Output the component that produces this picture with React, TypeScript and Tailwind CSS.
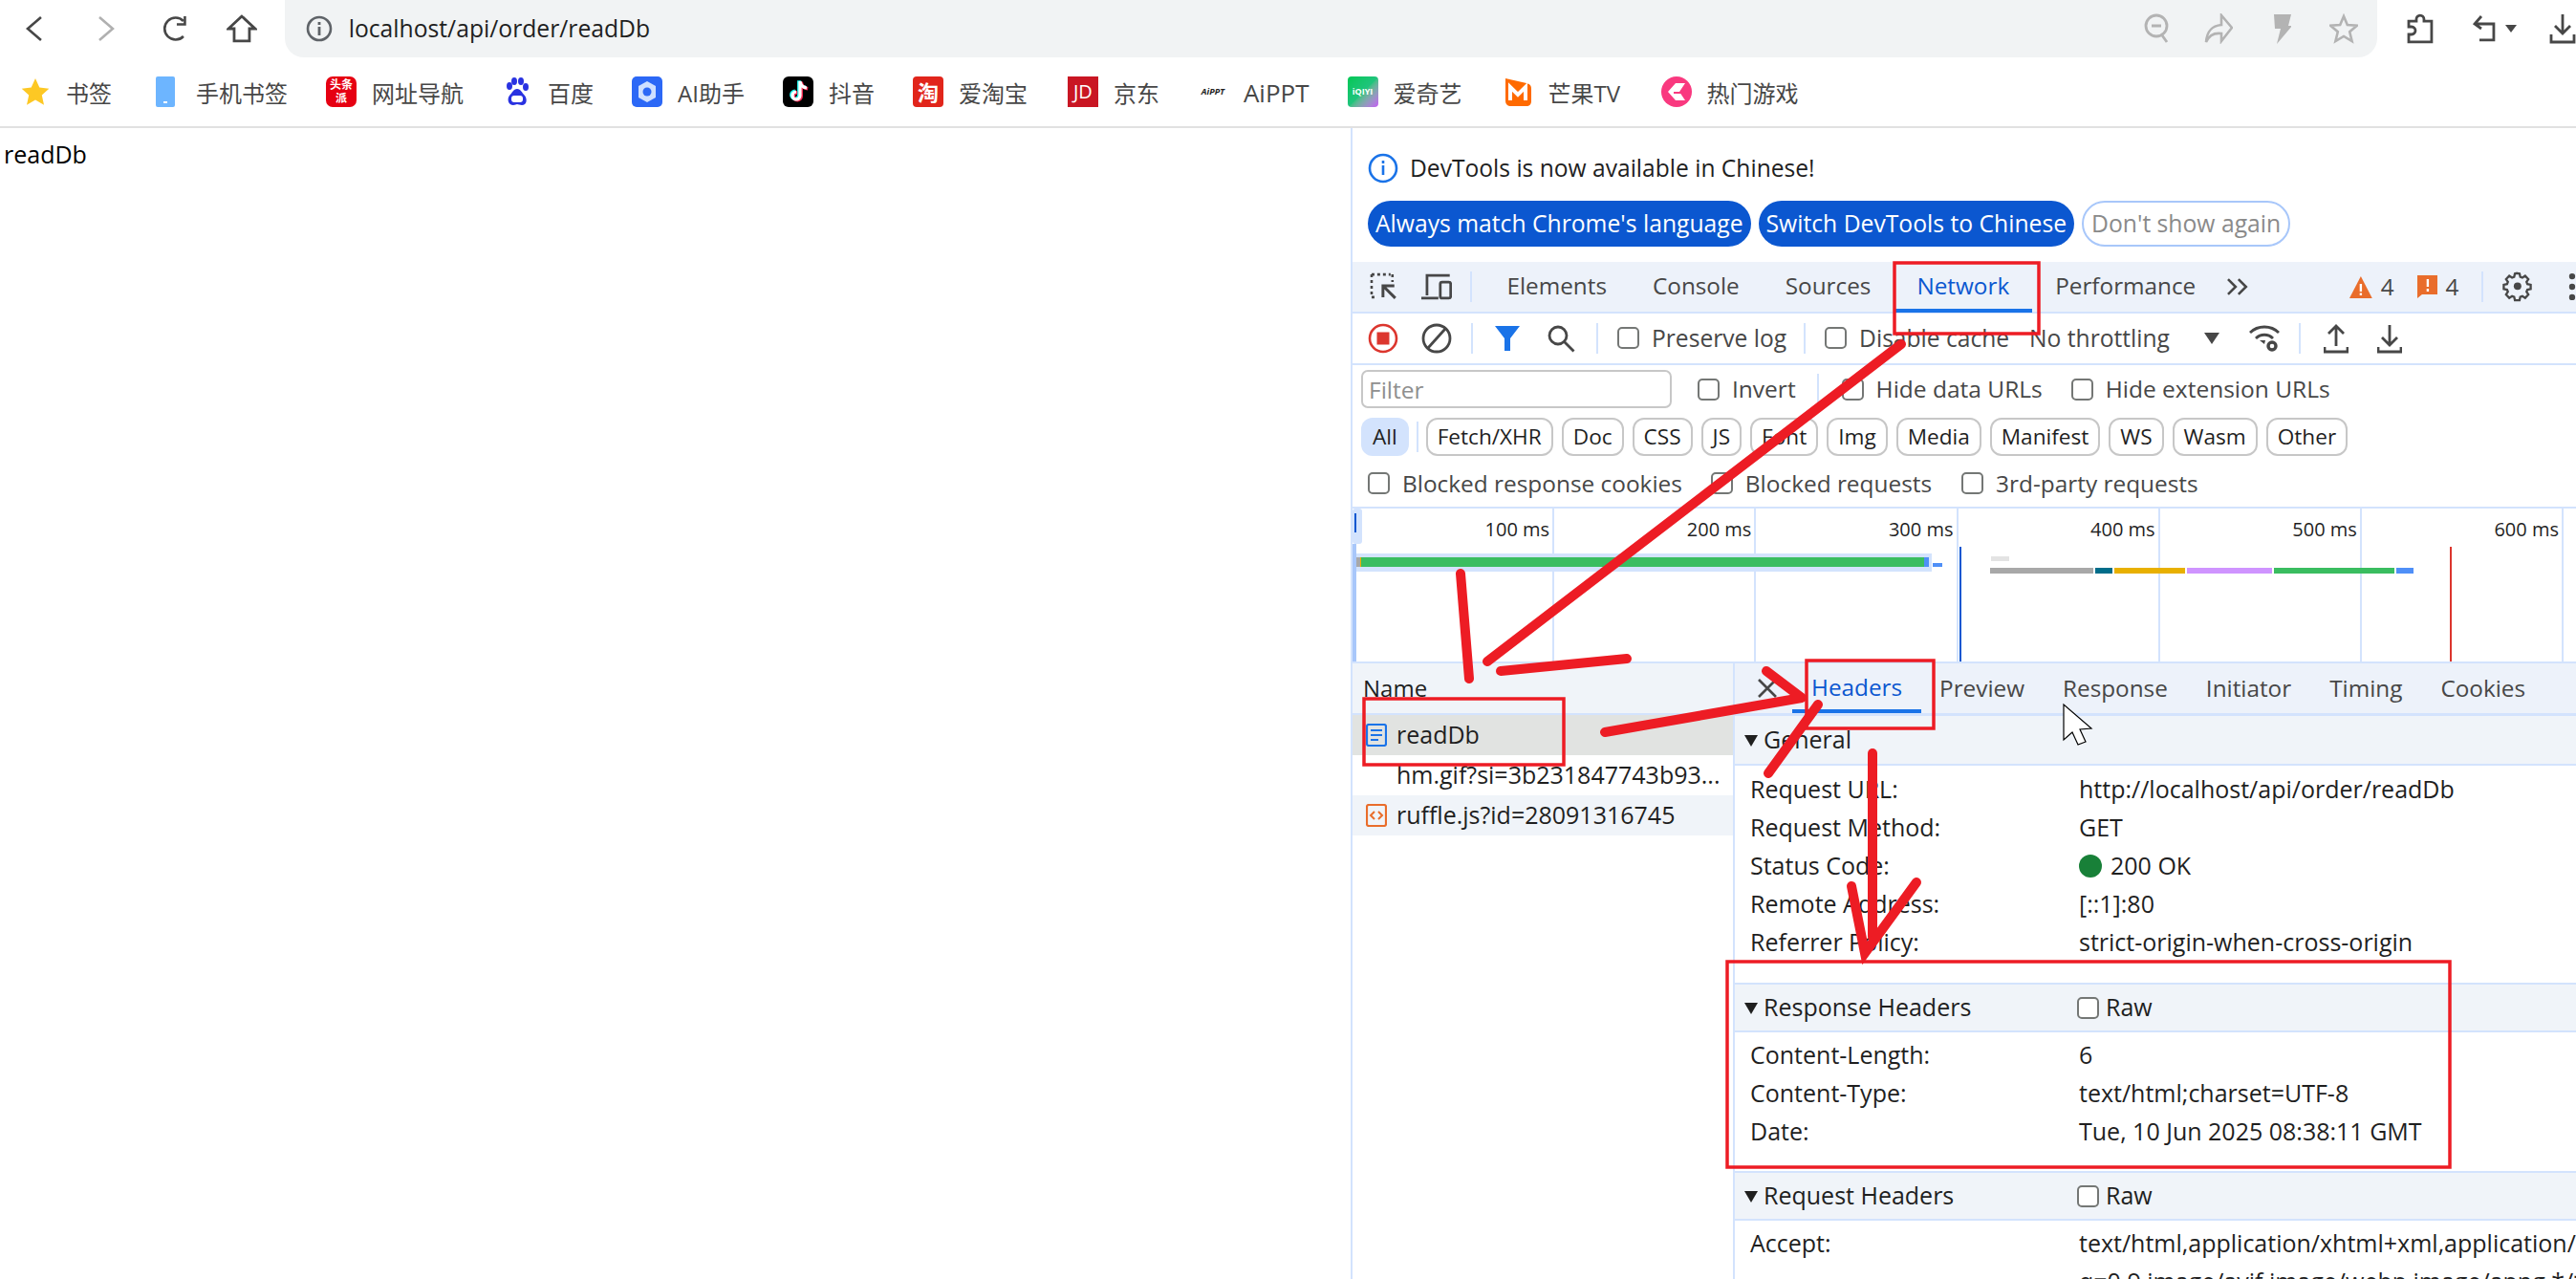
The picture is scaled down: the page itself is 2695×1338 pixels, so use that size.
const Check = () => (
  <span className="w-[23px] h-[23px] shrink-0 border-2 border-[#747775] rounded-[5px] bg-white" />
);

const Sep = ({ className }: { className: string }) => (
  <span className={"w-[2px] h-[32px] shrink-0 bg-[#d3e3fd] " + className} />
);

const CheckLabel = ({ text, className }: { text: string; className?: string }) => (
  <div className={"flex items-center gap-[13px] text-[#474747] " + (className || "")}>
    <Check />
    <span>{text}</span>
  </div>
);

const bookmarks: { label: string; text?: string; icon: React.ReactNode }[] = [
  {
    label: "书签",
    icon: (
      <svg viewBox="0 0 32 32" className="w-8 h-8">
        <path d="M16 2l4.3 9.6 10 1.1-7.5 6.9 2.2 10.2L16 24.6 7 29.8l2.2-10.2-7.5-6.9 10-1.1z" fill="#fdc824" />
      </svg>
    ),
  },
  {
    label: "手机书签",
    icon: (
      <svg viewBox="0 0 32 32" className="w-8 h-8">
        <rect x="6" y="0" width="20" height="32" rx="2" fill="#6db5ff" />
        <rect x="14" y="26" width="4" height="2" fill="#fff" />
      </svg>
    ),
  },
  {
    label: "网址导航",
    icon: (
      <div className="w-8 h-8 rounded-[7px] bg-[#e60012] text-white text-[12px] leading-[14px] font-bold flex flex-col items-center justify-center">
        <span>头条</span>
        <span>派</span>
      </div>
    ),
  },
  {
    label: "百度",
    icon: (
      <svg viewBox="0 0 32 32" className="w-8 h-8">
        <g fill="#2932e1">
          <ellipse cx="8" cy="10" rx="3" ry="4" />
          <ellipse cx="13" cy="5" rx="3" ry="4" />
          <ellipse cx="20" cy="5" rx="3" ry="4" />
          <ellipse cx="25" cy="11" rx="3" ry="4" />
          <path d="M16 13c-4 0-5 4-8 7-3 4-1 10 4 10 2 0 3-1 4-1s3 1 5 1c5 0 6-6 3-10-3-3-4-7-8-7z" />
        </g>
        <rect x="10" y="20" width="12" height="7" rx="3" fill="#fff" />
      </svg>
    ),
  },
  {
    label: "AI助手",
    icon: (
      <svg viewBox="0 0 32 32" className="w-8 h-8">
        <rect width="32" height="32" rx="5" fill="#2c68f6" />
        <path d="M16 5l9 5v12l-9 5-9-5V10z" fill="#cfe0ff" />
        <circle cx="16" cy="16" r="4.5" fill="#2c68f6" />
      </svg>
    ),
  },
  {
    label: "抖音",
    icon: (
      <svg viewBox="0 0 32 32" className="w-8 h-8">
        <rect width="32" height="32" rx="6" fill="#000" />
        <path d="M18 5v15a4 4 0 1 1-4-4M18 5c.5 4 3 6.5 7 7" fill="none" stroke="#25f4ee" strokeWidth="3.5" transform="translate(-1.2 -.8)" />
        <path d="M18 5v15a4 4 0 1 1-4-4M18 5c.5 4 3 6.5 7 7" fill="none" stroke="#fe2c55" strokeWidth="3.5" transform="translate(1.2 .8)" />
        <path d="M18 5v15a4 4 0 1 1-4-4M18 5c.5 4 3 6.5 7 7" fill="none" stroke="#fff" strokeWidth="3.2" />
      </svg>
    ),
  },
  {
    label: "爱淘宝",
    text: "w-[74px]",
    icon: (
      <div className="w-8 h-8 rounded-[4px] bg-[#e1251b] text-white text-[22px] leading-8 text-center font-bold">淘</div>
    ),
  },
  {
    label: "京东",
    icon: <div className="w-8 h-8 bg-[#c91623] text-white text-[20px] leading-8 text-center">JD</div>,
  },
  {
    label: "AiPPT",
    text: "text-[26px]",
    icon: <div className="w-8 h-8 text-[#222] text-[9px] leading-8 text-center font-bold italic whitespace-nowrap">AiPPT</div>,
  },
  {
    label: "爱奇艺",
    text: "w-[74px]",
    icon: (
      <div className="w-8 h-8 rounded-[4px] bg-linear-to-br from-[#00c853] via-[#1fc47c] to-[#c455f5] text-white text-[9px] leading-8 text-center font-bold">
        iQIYI
      </div>
    ),
  },
  {
    label: "芒果TV",
    text: "w-[78px]",
    icon: (
      <svg viewBox="0 0 32 32" className="w-8 h-8">
        <path d="M3 2l22 5c4 1 5 3 5 6v13c0 3-2 5-5 5H9c-4 0-6-2-6-6z" fill="#ff6a00" />
        <path d="M8 25V11l8 8 8-8v14" fill="none" stroke="#fff" strokeWidth="4" />
      </svg>
    ),
  },
  {
    label: "热门游戏",
    icon: (
      <svg viewBox="0 0 32 32" className="w-8 h-8">
        <circle cx="16" cy="16" r="16" fill="#f9397f" />
        <path d="M15 7L7 16l8 9h10l-6-9 6-9z" fill="#fff" />
        <path d="M13 16h15v2H13z" fill="#f9397f" />
      </svg>
    ),
  },
];

const BrowserBar = () => (
  <div className="h-[60px] flex items-center">
    <svg viewBox="0 0 20 28" className="w-[20px] h-[28px] ml-[26px]">
      <path d="M17 2L3 14l14 12" fill="none" stroke="#474747" strokeWidth="2.6" />
    </svg>
    <svg viewBox="0 0 20 28" className="w-[20px] h-[28px] ml-[55px]">
      <path d="M3 2l14 12L3 26" fill="none" stroke="#b0b0b0" strokeWidth="2.6" />
    </svg>
    <svg viewBox="0 0 28 28" className="w-[28px] h-[28px] ml-[48px]">
      <path d="M23 22a11.5 11.5 0 1 1 0-16" fill="none" stroke="#474747" strokeWidth="2.6" />
      <path d="M24.5 1v8.5H16" fill="none" stroke="#474747" strokeWidth="2.6" />
    </svg>
    <svg viewBox="0 0 32 30" className="w-[32px] h-[30px] ml-[40px]">
      <path d="M16 2L2 15h6v13h16V15h6z" fill="none" stroke="#474747" strokeWidth="2.8" />
    </svg>
    <div className="ml-[29px] w-[2196px] h-[60px] bg-[#f1f3f4] rounded-b-[20px] flex items-center">
      <svg viewBox="0 0 28 28" className="w-[28px] h-[28px] ml-[22px]">
        <circle cx="14" cy="14" r="12" fill="none" stroke="#5f6368" strokeWidth="2.6" />
        <path d="M14 12v9M14 7v3" stroke="#5f6368" strokeWidth="2.8" />
      </svg>
      <span className="ml-[17px] text-[#1f1f1f] text-[24.7px]">localhost/api/order/readDb</span>
      <div className="ml-auto flex items-center">
        <svg viewBox="0 0 28 32" className="w-[28px] h-[32px]">
          <circle cx="13" cy="13" r="11" fill="none" stroke="#b3b3b3" strokeWidth="2.8" />
          <path d="M8 13h10" stroke="#b3b3b3" strokeWidth="3" />
          <path d="M19 23l5 7" stroke="#b3b3b3" strokeWidth="2.8" />
        </svg>
        <svg viewBox="0 0 30 32" className="w-[30px] h-[32px] ml-[35px]">
          <path d="M18 2l11 13-11 14v-8c-8-1-13 2-16 9 1-12 6-17 16-18z" fill="none" stroke="#b3b3b3" strokeWidth="2.6" />
        </svg>
        <svg viewBox="0 0 20 32" className="w-[20px] h-[32px] ml-[41px]">
          <path d="M2 1h18l-3 12h4L5 32l4-16H3z" fill="#b3b3b3" />
        </svg>
        <svg viewBox="0 0 30 32" className="w-[30px] h-[32px] ml-[40px] mr-[20px]">
          <path d="M15 3l3.8 9 10 .8-7.6 6.4 2.4 9.8L15 24l-8.6 5 2.4-9.8L1.2 12.8l10-.8z" fill="none" stroke="#b3b3b3" strokeWidth="2.6" />
        </svg>
      </div>
    </div>
    <svg viewBox="0 0 28 32" className="w-[28px] h-[32px] ml-[31px]">
      <path d="M2 8h8V6a4 4 0 0 1 8 0v2h8v22H2v-8h3a4 4 0 0 0 0-8H2z" fill="none" stroke="#474747" strokeWidth="2.8" />
    </svg>
    <svg viewBox="0 0 28 32" className="w-[28px] h-[32px] ml-[40px]">
      <path d="M3 11h20v17H8M10 3L3 11l7 5" fill="none" stroke="#474747" strokeWidth="2.8" />
    </svg>
    <svg viewBox="0 0 12 8" className="w-[12px] h-[8px] ml-[7px]">
      <path d="M0 0h12L6 8z" fill="#474747" />
    </svg>
    <svg viewBox="0 0 28 32" className="w-[28px] h-[32px] ml-[34px] shrink-0">
      <path d="M14 1v20M6 13l8 8 8-8M2 22v8h24v-8" fill="none" stroke="#474747" strokeWidth="2.8" />
    </svg>
  </div>
);

const Bookmarks = () => (
  <div className="h-[74px] flex items-center gap-[40px] pl-[21px] border-b-2 border-[#e1e1e1] text-[24px] text-[#474747]">
    {bookmarks.map((b) => (
      <div key={b.label} className="flex items-center gap-4">
        {b.icon}
        <span className={"mt-[3px] " + (b.text || "")}>{b.label}</span>
      </div>
    ))}
  </div>
);

const InfoBar = () => (
  <div className="h-[140px] pl-[16px] pt-[26px]">
    <div className="flex items-center gap-[12px] h-[32px] text-[24.6px] text-[#1f1f1f]">
      <svg viewBox="0 0 32 32" className="w-[32px] h-[32px]">
        <circle cx="16" cy="16" r="14" fill="none" stroke="#1a73e8" strokeWidth="2.6" />
        <path d="M16 13v10M16 8v3" stroke="#1a73e8" strokeWidth="2.6" />
      </svg>
      <span>DevTools is now available in Chinese!</span>
    </div>
    <div className="flex gap-[8px] mt-[18px] text-[24.7px]">
      <button className="h-[48px] px-[8px] rounded-full bg-[#0b57d0] text-white">Always match Chrome's language</button>
      <button className="h-[48px] px-[8px] rounded-full bg-[#0b57d0] text-white">Switch DevTools to Chinese</button>
      <button className="h-[48px] px-[8px] rounded-full border-2 border-[#a8c7fa] text-[#8a8a8a]">Don't show again</button>
    </div>
  </div>
);

const TabBar = () => (
  <div className="h-[54px] flex items-center bg-[#edf2fa] border-b-2 border-[#d3e3fd] text-[24.3px] text-[#474747]">
    <svg viewBox="0 0 30 30" className="w-[30px] h-[30px] ml-[18px]">
      <path d="M2 2h20M2 2v22M24 2v8M2 26h6" fill="none" stroke="#474747" strokeWidth="2.6" strokeDasharray="3 3" />
      <path d="M27 27L14 14M14 26V14h12" fill="none" stroke="#474747" strokeWidth="3" />
    </svg>
    <svg viewBox="0 0 34 30" className="w-[34px] h-[30px] ml-[23px]">
      <path d="M7 24V3h24M1 27h18" fill="none" stroke="#474747" strokeWidth="2.8" />
      <rect x="21" y="10" width="11" height="17" rx="2" fill="none" stroke="#474747" strokeWidth="2.8" />
    </svg>
    <Sep className="ml-[19px]" />
    <div className="flex ml-[12px]">
      <span className="px-[24px] h-[52px] leading-[52px]">Elements</span>
      <span className="px-[24px] h-[52px] leading-[52px]">Console</span>
      <span className="px-[24px] h-[52px] leading-[52px]">Sources</span>
      <span className="px-[24px] h-[54px] leading-[52px] text-[#0b57d0] border-b-4 border-[#1a73e8]">Network</span>
      <span className="px-[24px] h-[52px] leading-[52px]">Performance</span>
    </div>
    <svg viewBox="0 0 26 20" className="w-[26px] h-[20px] ml-[7px]">
      <path d="M3 2l8 8-8 8M14 2l8 8-8 8" fill="none" stroke="#474747" strokeWidth="2.6" />
    </svg>
    <svg viewBox="0 0 26 24" className="w-[26px] h-[24px] ml-[103px]">
      <path d="M13 1l12 23H1z" fill="#e96d2b" />
      <path d="M13 9v8M13 18.5v2.5" stroke="#fff" strokeWidth="2.4" />
    </svg>
    <span className="ml-[8px]">4</span>
    <svg viewBox="0 0 22 26" className="w-[22px] h-[26px] ml-[24px]">
      <path d="M0 1h22v20H5l-5 4z" fill="#e96d2b" />
      <path d="M11 5v8M11 15v3" stroke="#fff" strokeWidth="2.4" />
    </svg>
    <span className="ml-[8px]">4</span>
    <Sep className="ml-[24px]" />
    <svg viewBox="0 0 24 24" className="w-[32px] h-[32px] ml-[20px]">
      <path d="M12 2.5l2 .3.6 2.7 1.7.7 2.3-1.5 2.6 2.7-1.5 2.3.7 1.7 2.7.6v3.4l-2.7.6-.7 1.7 1.5 2.3-2.6 2.7-2.3-1.5-1.7.7-.6 2.7h-3.8l-.6-2.7-1.7-.7-2.3 1.5-2.6-2.7 1.5-2.3-.7-1.7-2.7-.6v-3.4l2.7-.6.7-1.7-1.5-2.3 2.6-2.7 2.3 1.5 1.7-.7.6-2.7z" transform="translate(0 -1.2) scale(.97)" fill="none" stroke="#474747" strokeWidth="1.8" />
      <circle cx="12" cy="11.5" r="3" fill="#474747" />
    </svg>
    <svg viewBox="0 0 8 32" className="w-[8px] h-[32px] ml-[37px]">
      <circle cx="4" cy="5" r="3.2" fill="#474747" />
      <circle cx="4" cy="16" r="3.2" fill="#474747" />
      <circle cx="4" cy="27" r="3.2" fill="#474747" />
    </svg>
  </div>
);

const NetToolbar = () => (
  <div className="h-[54px] flex items-center border-b-2 border-[#d3e3fd] text-[24.6px] text-[#474747]">
    <svg viewBox="0 0 32 32" className="w-[32px] h-[32px] ml-[16px]">
      <circle cx="16" cy="16" r="14" fill="none" stroke="#dc362e" strokeWidth="2.6" />
      <rect x="9.5" y="9.5" width="13" height="13" fill="#dc362e" />
    </svg>
    <svg viewBox="0 0 32 32" className="w-[32px] h-[32px] ml-[24px]">
      <circle cx="16" cy="16" r="14" fill="none" stroke="#474747" strokeWidth="2.8" />
      <path d="M7 26L25 6" stroke="#474747" strokeWidth="2.8" />
    </svg>
    <Sep className="ml-[20px]" />
    <svg viewBox="0 0 26 28" className="w-[26px] h-[28px] ml-[23px]">
      <path d="M0 1h26L16 14v13h-6V14z" fill="#1a73e8" />
    </svg>
    <svg viewBox="0 0 30 30" className="w-[30px] h-[30px] ml-[28px]">
      <circle cx="12" cy="12" r="9" fill="none" stroke="#474747" strokeWidth="2.8" />
      <path d="M18.5 18.5l10 10" stroke="#474747" strokeWidth="2.8" />
    </svg>
    <Sep className="ml-[22px]" />
    <CheckLabel text="Preserve log" className="ml-[20px]" />
    <Sep className="ml-[18px]" />
    <CheckLabel text="Disable cache" className="ml-[20px]" />
    <span className="ml-[21px]">No throttling</span>
    <svg viewBox="0 0 16 12" className="w-[16px] h-[12px] ml-[36px]">
      <path d="M0 0h16L8 12z" fill="#474747" />
    </svg>
    <svg viewBox="0 0 34 32" className="w-[34px] h-[32px] ml-[30px]">
      <path d="M2 10c8-8 22-8 30 0M8 16c5-5 13-5 18 0" fill="none" stroke="#474747" strokeWidth="2.8" />
      <path d="M17 22l-5-4h6z" fill="#474747" />
      <circle cx="25" cy="24" r="4" fill="none" stroke="#474747" strokeWidth="3.4" />
    </svg>
    <Sep className="ml-[19px]" />
    <svg viewBox="0 0 26 32" className="w-[26px] h-[32px] ml-[24px]">
      <path d="M13 24V3M5 11l8-8 8 8M1 25v5h24v-5" fill="none" stroke="#474747" strokeWidth="2.8" />
    </svg>
    <svg viewBox="0 0 26 32" className="w-[26px] h-[32px] ml-[30px]">
      <path d="M13 2v21M5 15l8 8 8-8M1 25v5h24v-5" fill="none" stroke="#474747" strokeWidth="2.8" />
    </svg>
  </div>
);

const chips = ["Fetch/XHR", "Doc", "CSS", "JS", "Font", "Img", "Media", "Manifest", "WS", "Wasm", "Other"];

const FilterRows = () => (
  <div className="text-[24.5px] border-b-2 border-[#d3e3fd]">
    <div className="h-[50px] flex items-center pl-[9px] text-[#474747]">
      <div className="w-[325px] h-[40px] border-2 border-[#c7c7c7] rounded-[7px] px-[6px] leading-[38px] text-[#8f8f8f]">
        Filter
      </div>
      <CheckLabel text="Invert" className="ml-[27px]" />
      <Sep className="ml-[22px]" />
      <CheckLabel text="Hide data URLs" className="ml-[24px]" />
      <CheckLabel text="Hide extension URLs" className="ml-[30px]" />
    </div>
    <div className="h-[50px] flex items-center pl-[9px] text-[22.6px] text-[#1f1f1f]">
      <span className="h-[40px] px-[12px] leading-[40px] rounded-[12px] bg-[#d3e3fd]">All</span>
      <Sep className="ml-[8px]" />
      <div className="flex gap-[9px] ml-[8px]">
        {chips.map((c) => (
          <span key={c} className="h-[40px] px-[10px] leading-[36px] border-2 border-[#c7c7c7] rounded-[12px]">
            {c}
          </span>
        ))}
      </div>
    </div>
    <div className="h-[48px] flex items-center pl-[16px] text-[24.4px] text-[#474747]">
      <CheckLabel text="Blocked response cookies" />
      <CheckLabel text="Blocked requests" className="ml-[30px]" />
      <CheckLabel text="3rd-party requests" className="ml-[31px]" />
    </div>
  </div>
);

const Overview = () => (
  <div className="relative h-[162px] border-b-2 border-[#d3e3fd]">
    <div className="w-[1267px] h-[160px] grid grid-cols-6 text-[20px] text-[#1f1f1f]">
      {["100 ms", "200 ms", "300 ms", "400 ms", "500 ms", "600 ms"].map((t) => (
        <div key={t} className="border-r-2 border-[#d3e3fd] text-right pr-[3px] pt-[7px]">
          {t}
        </div>
      ))}
    </div>
    {/* waterfall bars, coordinates relative to the overview */}
    <svg viewBox="0 0 1280 160" className="absolute left-0 top-0 w-[1280px] h-[160px]">
      <rect x="0" y="0" width="10" height="37" rx="3" fill="#d3e3fd" />
      <rect x="2" y="5" width="2" height="20" fill="#0b57d0" />
      <rect x="0" y="37" width="4" height="123" fill="#a8c7fa" />
      <rect x="4" y="47" width="602" height="19" fill="#d3e3fd" />
      <rect x="4" y="51" width="4" height="10" fill="#a8a8a8" />
      <rect x="8" y="51" width="1" height="10" fill="#e8b000" />
      <rect x="9" y="51" width="589" height="10" fill="#3abd60" />
      <rect x="598" y="51" width="5" height="10" fill="#4f8ff7" />
      <rect x="607" y="57" width="10" height="4" fill="#4f8ff7" />
      <rect x="635" y="40" width="2" height="120" fill="#0b57d0" />
      <rect x="668" y="50" width="19" height="5" fill="#e3e3e3" />
      <rect x="667" y="62" width="108" height="6" fill="#a8a8a8" />
      <rect x="777" y="62" width="18" height="6" fill="#006d8a" />
      <rect x="797" y="62" width="74" height="6" fill="#e8b000" />
      <rect x="873" y="62" width="89" height="6" fill="#cf94ff" />
      <rect x="964" y="62" width="126" height="6" fill="#3abd60" />
      <rect x="1092" y="62" width="18" height="6" fill="#4f8ff7" />
      <rect x="1148" y="40" width="2" height="120" fill="#dc362e" />
    </svg>
  </div>
);

const NameRow = ({ name, className, icon }: { name: string; className: string; icon?: React.ReactNode }) => (
  <div className={"h-[42px] flex items-center pl-[14px] whitespace-nowrap text-[25px] text-[#1f1f1f] " + className}>
    <span className="w-[22px] h-[24px] mr-[10px] shrink-0">{icon}</span>
    {name}
  </div>
);

const RequestList = () => (
  <div className="w-[398px] shrink-0 text-[24px]">
    <div className="h-[54px] bg-[#f0f4f9] border-b-2 border-[#d3e3fd] pl-[11px] leading-[52px] text-[#1f1f1f]">Name</div>
    <NameRow
      name="readDb"
      className="bg-[#e1e3e1]"
      icon={
        <svg viewBox="0 0 22 24" className="w-[22px] h-[24px]">
          <rect x="1" y="1" width="20" height="22" rx="2" fill="none" stroke="#1a73e8" strokeWidth="2.2" />
          <path d="M5 7h12M5 12h12M5 17h8" stroke="#1a73e8" strokeWidth="2.2" />
        </svg>
      }
    />
    <NameRow name="hm.gif?si=3b231847743b93..." className="bg-white" />
    <NameRow
      name="ruffle.js?id=28091316745"
      className="bg-[#f0f4f9]"
      icon={
        <svg viewBox="0 0 22 24" className="w-[22px] h-[24px]">
          <rect x="1" y="1" width="20" height="22" rx="2" fill="none" stroke="#e96d2b" strokeWidth="2.2" />
          <path d="M9 8l-4 4 4 4M13 8l4 4-4 4" fill="none" stroke="#e96d2b" strokeWidth="2" />
        </svg>
      }
    />
  </div>
);

const detailTabs = ["Preview", "Response", "Initiator", "Timing", "Cookies"];

const SectionHead = ({ title, raw, top }: { title: string; raw?: boolean; top?: boolean }) => (
  <div className={"h-[52px] flex items-center bg-[#f0f4f9] border-b-2 border-[#d3e3fd] " + (top ? "border-t-2" : "")}>
    <svg viewBox="0 0 14 14" className="w-[14px] h-[14px] ml-[10px] mt-[2px]">
      <path d="M0 1h14L7 13z" fill="#1f1f1f" />
    </svg>
    <span className="ml-[6px] w-[328px] text-[#1f1f1f]">{title}</span>
    {raw && (
      <div className="flex items-center gap-[7px] text-[#1f1f1f]">
        <Check />
        <span>Raw</span>
      </div>
    )}
  </div>
);

const Field = ({ name, children }: { name: string; children: React.ReactNode }) => (
  <div className="h-[40px] flex items-center pl-[16px] text-[#1f1f1f] whitespace-nowrap">
    <span className="w-[344px] shrink-0">{name}</span>
    {children}
  </div>
);

const Details = () => (
  <div className="flex-1 min-w-0 overflow-hidden border-l-2 border-[#d3e3fd] text-[25px]">
    <div className="h-[55px] flex items-center bg-[#edf2fa] border-b-[3px] border-[#d3e3fd] text-[24.3px] text-[#474747]">
      <svg viewBox="0 0 22 22" className="w-[22px] h-[22px] ml-[23px]">
        <path d="M2 2l18 18M20 2L2 20" stroke="#474747" strokeWidth="2.6" />
      </svg>
      <span className="ml-[15px] h-[52px] px-[20px] leading-[50px] text-[#0b57d0] border-b-4 border-[#1a73e8]">Headers</span>
      <div className="flex gap-[40px] ml-[19px]">
        {detailTabs.map((t) => (
          <span key={t}>{t}</span>
        ))}
      </div>
    </div>
    <SectionHead title="General" />
    <div className="pt-[5px] pb-[22px]">
      <Field name="Request URL:">http://localhost/api/order/readDb</Field>
      <Field name="Request Method:">GET</Field>
      <Field name="Status Code:">
        <span className="w-[24px] h-[24px] rounded-full bg-[#188038] mr-[9px]" />
        200 OK
      </Field>
      <Field name="Remote Address:">[::1]:80</Field>
      <Field name="Referrer Policy:">strict-origin-when-cross-origin</Field>
    </div>
    <SectionHead title="Response Headers" raw top />
    <div className="pt-[4px] pb-[21px]">
      <Field name="Content-Length:">6</Field>
      <Field name="Content-Type:">text/html;charset=UTF-8</Field>
      <Field name="Date:">Tue, 10 Jun 2025 08:38:11 GMT</Field>
    </div>
    <SectionHead title="Request Headers" raw top />
    <div className="pt-[4px]">
      <Field name="Accept:">text/html,application/xhtml+xml,application/xml;q=0.9,image/avif,image/webp</Field>
      <Field name="">q=0.9,image/avif,image/webp,image/apng,*/*;q=0.8</Field>
    </div>
  </div>
);

// red marks someone drew over the screenshot
const Annotations = () => (
  <svg viewBox="0 0 2695 1338" className="absolute left-0 top-0 w-[2695px] h-[1338px] pointer-events-none">
    <g fill="none" stroke="#ed1c24" strokeWidth="3.5">
      <rect x="1982" y="275" width="151" height="74" />
      <rect x="1427" y="731" width="209" height="69" />
      <rect x="1890" y="691" width="133" height="71" />
      <rect x="1807" y="1006" width="756" height="215" />
    </g>
    <g fill="none" stroke="#ed1c24" strokeWidth="10" strokeLinecap="round">
      <path d="M1989 360L1556 692" />
      <path d="M1528 600l9 110" />
      <path d="M1570 702l132-13" />
      <path d="M1679 766l206-36M1848 702l37 28" />
      <path d="M1902 737l-52 72" />
      <path d="M1959 788v192" />
      <path d="M1937 927l14 70 54-74" />
    </g>
    <path d="M2159 737v37l9-8 6 13 8-3-6-13 12-1z" fill="#fff" stroke="#000" strokeWidth="1.2" />
  </svg>
);

export default function App() {
  return (
    <div className="relative w-[2695px] h-[1338px] overflow-hidden bg-white font-['Open_Sans','Noto_Sans_CJK_SC',sans-serif]">
      <BrowserBar />
      <Bookmarks />
      <div className="flex h-[1204px]">
        <div className="w-[1413px] shrink-0 pl-[4px] pt-[9px] text-[25px] text-black">readDb</div>
        <div className="flex-1 min-w-0 flex flex-col border-l-2 border-[#d3e3fd] overflow-hidden whitespace-nowrap">
          <InfoBar />
          <TabBar />
          <NetToolbar />
          <FilterRows />
          <Overview />
          <div className="flex flex-1 min-h-0">
            <RequestList />
            <Details />
          </div>
        </div>
      </div>
      <Annotations />
    </div>
  );
}
